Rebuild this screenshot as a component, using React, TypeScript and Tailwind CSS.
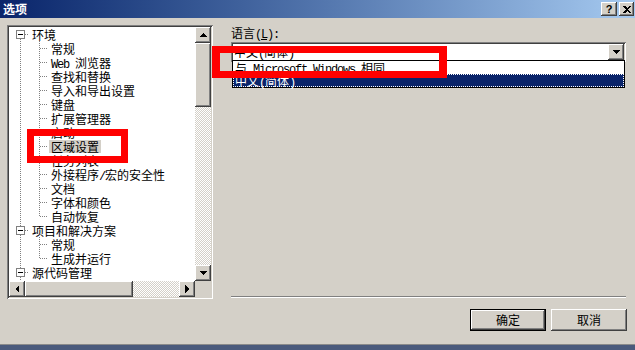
import React from 'react';

type Cell = 'expFirst' | 'expMid' | 'pipe' | 'tee' | 'elbow';

interface TreeRow {
  label: React.ReactNode;
  cells: Cell[];
  selected?: boolean;
}

const mono = "font-['Liberation_Mono','Noto_Sans_CJK_SC',monospace] tracking-[-1.2px]";

const raised =
  'shadow-[inset_-1px_-1px_#404040,inset_1px_1px_#ffffff,inset_-2px_-2px_#808080,inset_2px_2px_#d4d0c8]';

const checker =
  'bg-[image:repeating-conic-gradient(#d4d0c8_0_25%,#ffffff_0_50%)] bg-[length:2px_2px]';

const rows: TreeRow[] = [
  { label: '环境', cells: ['expFirst'] },
  { label: '常规', cells: ['pipe', 'tee'] },
  {
    label: (
      <>
        <span className={mono}>Web </span>浏览器
      </>
    ),
    cells: ['pipe', 'tee'],
  },
  { label: '查找和替换', cells: ['pipe', 'tee'] },
  { label: '导入和导出设置', cells: ['pipe', 'tee'] },
  { label: '键盘', cells: ['pipe', 'tee'] },
  { label: '扩展管理器', cells: ['pipe', 'tee'] },
  { label: '启动', cells: ['pipe', 'tee'] },
  { label: '区域设置', cells: ['pipe', 'tee'], selected: true },
  { label: '任务列表', cells: ['pipe', 'tee'] },
  {
    label: (
      <>
        外接程序<span className={mono}>/</span>宏的安全性
      </>
    ),
    cells: ['pipe', 'tee'],
  },
  { label: '文档', cells: ['pipe', 'tee'] },
  { label: '字体和颜色', cells: ['pipe', 'tee'] },
  { label: '自动恢复', cells: ['pipe', 'elbow'] },
  { label: '项目和解决方案', cells: ['expMid'] },
  { label: '常规', cells: ['pipe', 'tee'] },
  { label: '生成并运行', cells: ['pipe', 'elbow'] },
  { label: '源代码管理', cells: ['expMid'] },
  { label: '插件选择', cells: ['pipe', 'tee'] },
];

// tree connector drawn per 19x14 cell
const TreeCell: React.FC<{ kind: Cell }> = ({ kind }) => {
  const dot = { stroke: '#808080', strokeDasharray: '1 1', strokeWidth: 1 };
  return (
    <svg width={19} height={14} className="shrink-0" shapeRendering="crispEdges">
      {(kind === 'pipe' || kind === 'tee') && <line x1={10.5} y1={0} x2={10.5} y2={14} {...dot} />}
      {kind === 'elbow' && <line x1={10.5} y1={0} x2={10.5} y2={8} {...dot} />}
      {(kind === 'tee' || kind === 'elbow') && <line x1={11} y1={7.5} x2={19} y2={7.5} {...dot} />}
      {(kind === 'expFirst' || kind === 'expMid') && (
        <>
          {kind === 'expMid' && <line x1={10.5} y1={0} x2={10.5} y2={3} {...dot} />}
          <line x1={10.5} y1={12} x2={10.5} y2={14} {...dot} />
          <line x1={15} y1={7.5} x2={19} y2={7.5} {...dot} />
          <rect x={6.5} y={3.5} width={8} height={8} fill="#ffffff" stroke="#808080" />
          <line x1={8} y1={7.5} x2={13} y2={7.5} stroke="#000000" />
        </>
      )}
    </svg>
  );
};

const Arrow: React.FC<{ dir: 'up' | 'down' | 'left' | 'right' }> = ({ dir }) => {
  const pts = {
    up: '4,1 8,5 0,5',
    down: '0,1 8,1 4,5',
    left: '5,0 5,8 1,4',
    right: '1,0 1,8 5,4',
  }[dir];
  const vertical = dir === 'up' || dir === 'down';
  return (
    <svg width={vertical ? 8 : 6} height={vertical ? 6 : 8} shapeRendering="crispEdges">
      <polygon points={pts} fill="#000000" />
    </svg>
  );
};

const ScrollButton: React.FC<{ dir: 'up' | 'down' | 'left' | 'right' }> = ({ dir }) => (
  <div className={`w-[16px] h-[16px] shrink-0 bg-[#d4d0c8] flex items-center justify-center ${raised}`}>
    <Arrow dir={dir} />
  </div>
);

export default function App() {
  return (
    <div className="relative w-[635px] h-[350px] overflow-hidden bg-[#d4d0c8] text-[12px] leading-[14px] text-black font-['Noto_Sans_CJK_SC',sans-serif] flex flex-col">
      {/* Title bar */}
      <div className="h-[18px] shrink-0 flex items-center pl-[3px] pr-[1px] bg-gradient-to-r from-[#0a246a] to-[#a6caf0]">
        <span className="text-white font-bold text-[12px] leading-[14px]">选项</span>
        <div className="ml-auto flex gap-[2px]">
          <div className={`w-[16px] h-[14px] bg-[#d4d0c8] flex items-center justify-center ${raised}`}>
            <span className="font-['Liberation_Sans',sans-serif] font-bold text-[11px] leading-[11px] mt-[1px]">?</span>
          </div>
          <div className={`w-[15px] h-[14px] bg-[#d4d0c8] flex items-center justify-center ${raised}`}>
            <svg width={8} height={7} shapeRendering="crispEdges">
              <path d="M0 0h2l2 2 2-2h2L5 3.5 8 7H6L4 5 2 7H0l3-3.5z" fill="#000000" />
            </svg>
          </div>
        </div>
      </div>

      {/* Body */}
      <div className="flex pt-[7px] pl-[7px]">
        {/* Tree panel */}
        <div className="w-[206px] h-[274px] p-[2px] bg-white shadow-[inset_1px_1px_#808080,inset_-1px_-1px_#ffffff,inset_2px_2px_#404040,inset_-2px_-2px_#d4d0c8] flex flex-col">
          <div className="flex flex-1 min-h-0">
            <div className="flex-1 overflow-hidden pl-[1px]">
              {rows.map((r, i) => (
                <div key={i} className="flex h-[14px] items-center whitespace-nowrap">
                  {r.cells.map((c, j) => (
                    <TreeCell key={j} kind={c} />
                  ))}
                  <span className={`ml-[1px] px-[2px] h-[13px] leading-[13px] ${r.selected ? 'bg-[#d4d0c8]' : ''}`}>
                    {r.label}
                  </span>
                </div>
              ))}
            </div>
            {/* Vertical scrollbar */}
            <div className="w-[16px] flex flex-col">
              <ScrollButton dir="up" />
              <div className={`h-[64px] shrink-0 bg-[#d4d0c8] ${raised}`} />
              <div className={`flex-1 ${checker}`} />
              <ScrollButton dir="down" />
            </div>
          </div>
          {/* Horizontal scrollbar */}
          <div className="h-[16px] flex shrink-0">
            <ScrollButton dir="left" />
            <div className={`w-[108px] shrink-0 bg-[#d4d0c8] ${raised}`} />
            <div className={`flex-1 ${checker}`} />
            <ScrollButton dir="right" />
            <div className="w-[16px] bg-[#d4d0c8]" />
          </div>
        </div>

        {/* Right column */}
        <div className="ml-[18px] w-[395px] h-[274px] flex flex-col">
          <div className="mt-[1px] h-[14px]">
            语言<span className={mono}>
              (<span className="underline">L</span>):
            </span>
          </div>
          <div className="relative mt-[2px]">
            <div className="h-[20px] p-[2px] bg-white flex shadow-[inset_1px_1px_#808080,inset_-1px_-1px_#ffffff,inset_2px_2px_#404040,inset_-2px_-2px_#d4d0c8]">
              <div className="flex-1 pl-[1px] leading-[16px]">
                中文<span className={mono}>(</span>简体<span className={mono}>)</span>
              </div>
              <ScrollButton dir="down" />
            </div>
            {/* open dropdown list */}
            <div className="absolute left-[1px] right-[1px] top-[18px] border border-black bg-white">
              <div className="h-[13px] leading-[13px] px-[2px] whitespace-nowrap">
                与<span className={mono}> Microsoft Windows </span>相同
              </div>
              <div className="h-[13px] leading-[13px] px-[2px] bg-[#0a246a] text-white outline-1 outline-dotted outline-[#ffffff] -outline-offset-1">
                中文<span className={mono}>(</span>简体<span className={mono}>)</span>
              </div>
            </div>
          </div>
          <div className="mt-auto h-[2px] border-t border-[#808080] border-b border-b-white mb-[1px]" />
        </div>
      </div>

      {/* Buttons */}
      <div className="flex justify-end gap-[5px] pr-[8px] mt-[10px]">
        <div className="w-[76px] h-[22px] border border-black">
          <div className={`w-full h-full bg-[#d4d0c8] flex items-center justify-center ${raised}`}>确定</div>
        </div>
        <div className={`w-[76px] h-[22px] bg-[#d4d0c8] flex items-center justify-center ${raised}`}>取消</div>
      </div>

      <div className="mt-auto h-[6px] border-t border-[#8a8a8a] bg-[#4a5a7c]" />

      {/* Red annotation boxes */}
      <div className="absolute left-[27px] top-[129px] w-[101px] h-[34px] border-[7px] border-[#ff0000]" />
      <div className="absolute left-[212px] top-[46px] w-[235px] h-[32px] border-x-[8px] border-y-[7px] border-[#ff0000]" />
    </div>
  );
}
